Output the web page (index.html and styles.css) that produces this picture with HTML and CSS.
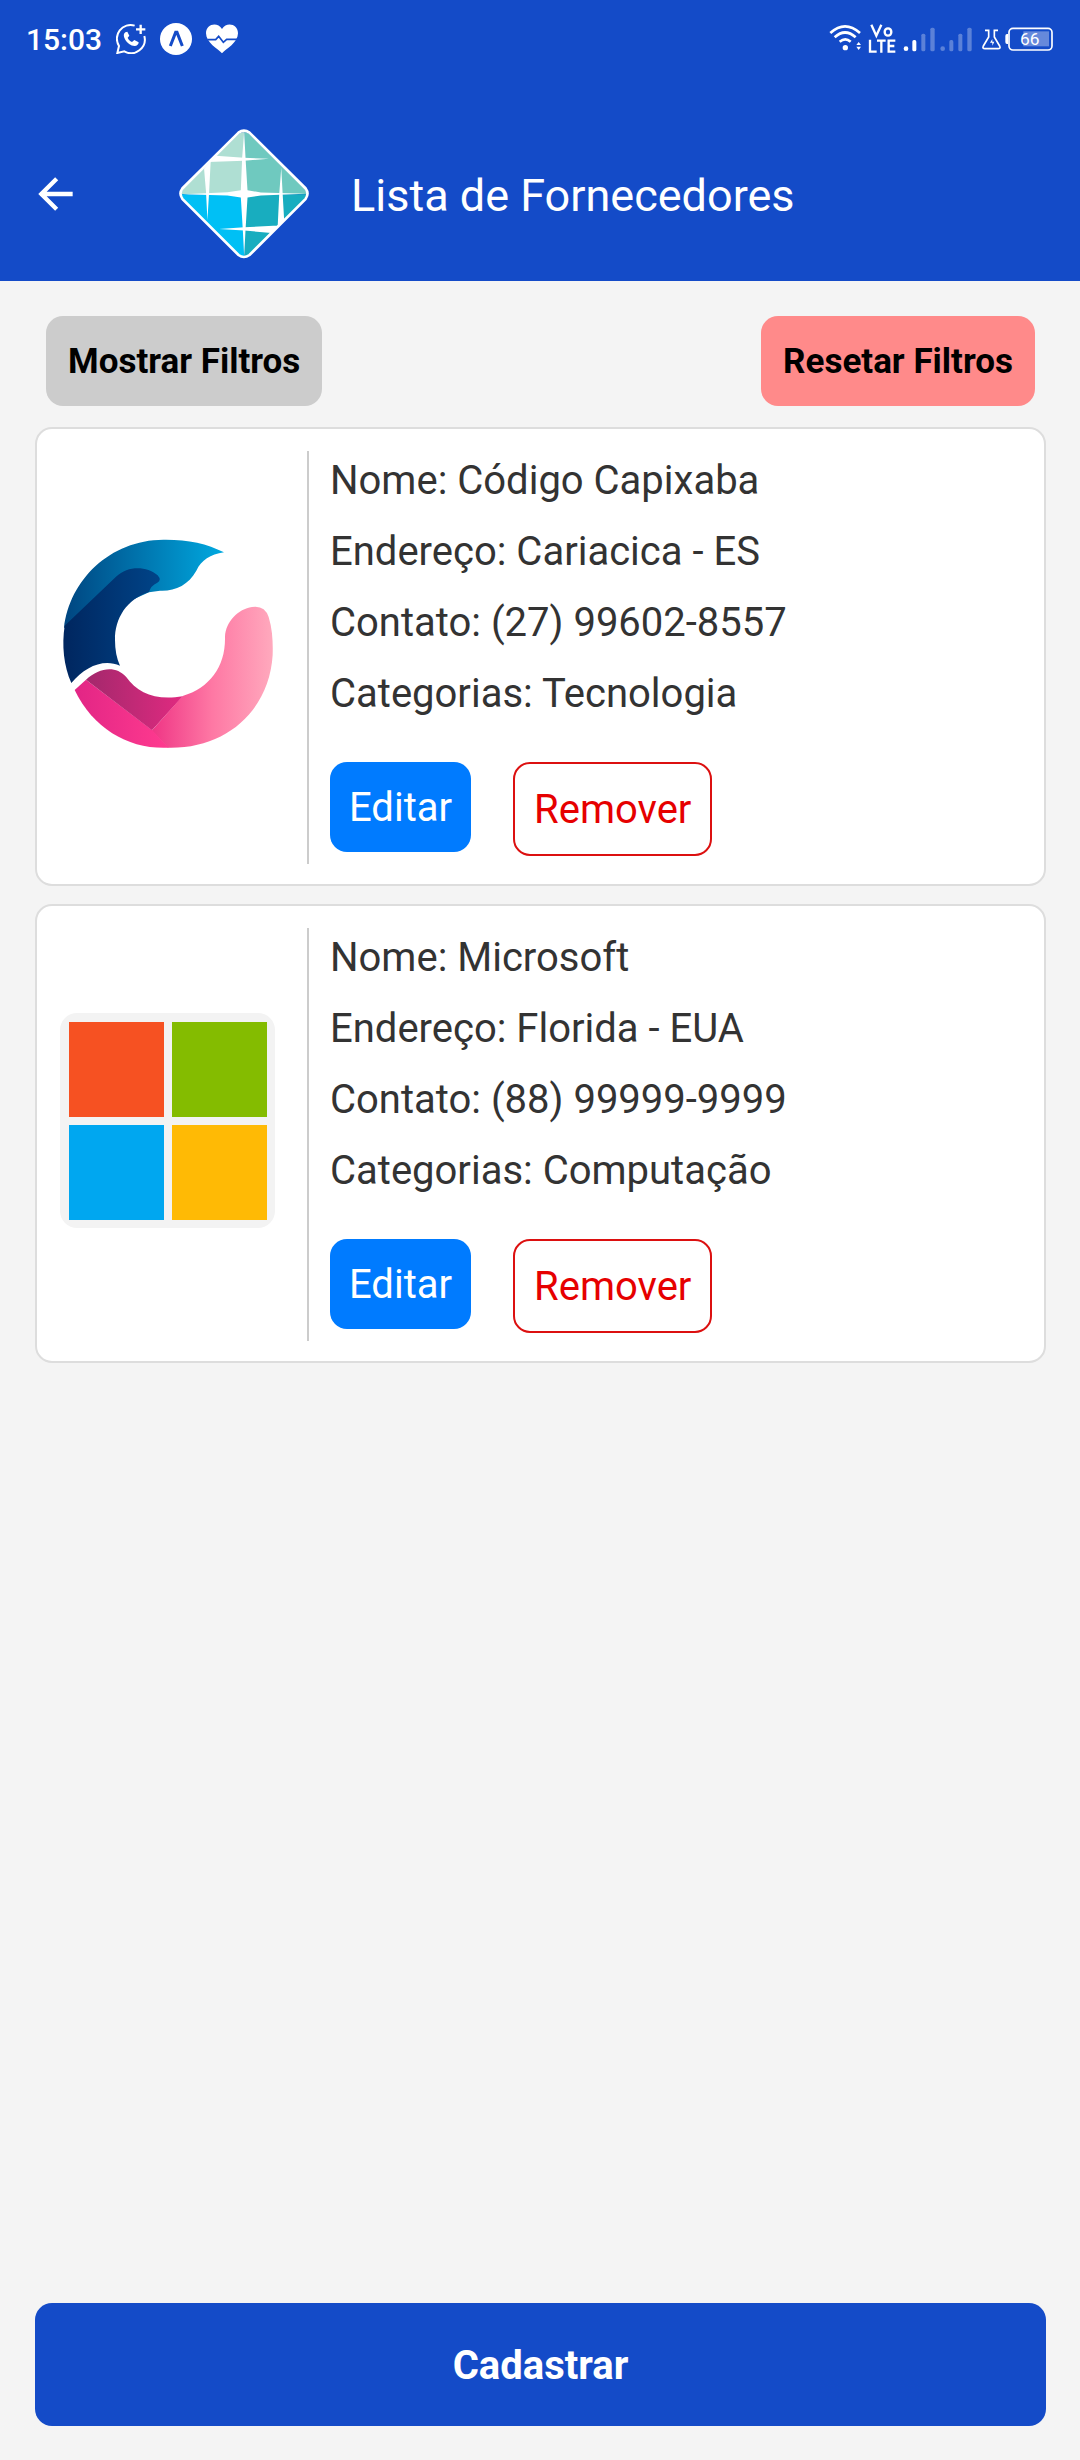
FILE: index.html
```html
<!DOCTYPE html>
<html lang="pt-BR">
<head>
<meta charset="utf-8">
<meta name="viewport" content="width=device-width, initial-scale=1">
<title>Lista de Fornecedores</title>
<link rel="stylesheet" href="styles.css">
</head>
<body>
<div class="top">
  <div class="status">
    <div class="status-left">
      <span class="clock">15:03</span>
      <svg class="status-icon" width="30" height="30" viewBox="343 72 90 90" fill="none" stroke="#fff" stroke-width="6">
        <path d="M399 77a41 41 0 0 0-47 61l-5 21 21-5a41 41 0 0 0 60-46"/>
        <path d="M403 88h28M417 74v28" stroke-width="7"/>
        <path d="M371 97c-6 4-6 12-1 21 7 12 17 20 29 20 7 0 12-5 12-11l-13-7-7 6c-7-3-10-7-13-13l5-6-6-12z" fill="#fff" stroke="none"/>
      </svg>
      <svg class="status-icon" width="32" height="32" viewBox="480 69 96 96">
        <circle cx="528" cy="117" r="48" fill="#fff"/>
        <path d="M511 138l16-41h4l16 41" fill="none" stroke="#144bc8" stroke-width="9"/>
      </svg>
      <svg class="status-icon" width="32" height="30" viewBox="621 73 96 88">
        <path d="M669 160c-12-13-48-32-48-60 0-28 34-36 48-13 14-23 48-15 48 13 0 28-36 47-48 60z" fill="#fff"/>
        <path d="M625 119h25l9-10 14 18 10-9h31" fill="none" stroke="#144bc8" stroke-width="5"/>
      </svg>
    </div>
    <svg class="status-right" width="226" height="32" viewBox="58 69 678 96" fill="none" stroke="#fff" stroke-width="7">
      <path d="M62 99q44-40 89 0M75 112q31-29 63 0M90 125q17-14 33 0" stroke-width="8"/>
      <circle cx="107" cy="143" r="8" fill="#fff" stroke="none"/>
      <path d="M147 126l7 9h-14zM147 150l-7-10h14z" fill="#fff" stroke="none"/>
      <path d="M185 74l15 33 15-33"/>
      <ellipse cx="235" cy="96" rx="10" ry="11"/>
      <path d="M181 119v36h20M202 122h26M215 122v36M257 122h-20v33h20M237 138h17"/>
      <g stroke="none" fill="#fff">
        <circle cx="289" cy="146" r="7"/><rect x="308" y="120" width="12" height="34" rx="5"/>
        <g opacity=".3"><rect x="335" y="101" width="12" height="53" rx="5"/><rect x="362" y="83" width="13" height="71" rx="5"/><circle cx="399" cy="146" r="7"/><rect x="419" y="120" width="12" height="34" rx="5"/><rect x="446" y="101" width="12" height="53" rx="5"/><rect x="473" y="83" width="13" height="71" rx="5"/></g>
      </g>
      <path d="M526 91h11v20l-16 27q-4 8 5 8h39q9 0 5-8l-16-27v-20h11" stroke-width="5"/>
      <path d="M548 117l-7 11h7v9l6-12h-6z" fill="#fff" stroke="none"/>
      <rect x="641" y="94" width="77" height="45" fill="#fff" opacity=".35" stroke="none"/>
      <rect x="598" y="85" width="129" height="65" rx="12" stroke-width="5"/>
      <path d="M595 102h-3q-5 0-5 6v18q0 6 5 6h3z" fill="#fff" stroke="none"/>
      <text class="battery-text" x="631" y="135" fill="#fff" stroke="none">66</text>
    </svg>
  </div>
  <header class="header">
    <button class="back" type="button" aria-label="Voltar">
      <svg width="36" height="36" viewBox="116 198 108 108" fill="none" stroke="#fff" stroke-width="13"><path d="M220 252h-94M172 206l-46 46 46 46"/></svg>
    </button>
    <svg class="brand" width="130" height="130" viewBox="539 59 389 389">
      <defs><clipPath id="gem"><path d="M717 74q16-12 33 0l165 164q11 15 0 30l-165 167q-17 12-33 0l-165-167q-11-15 0-30z"/></clipPath></defs>
      <g clip-path="url(#gem)">
        <path d="M540 60h194v194h-194z" fill="#afdfd3"/><path d="M734 60h194v194h-194z" fill="#6fc9bf"/>
        <path d="M540 254h194v194h-194z" fill="#00c0f5"/><path d="M734 254h194v194h-194z" fill="#18adbf"/>
        <g fill="#fff">
          <path d="M734 66l4 78 6 98 40 7 132 4-132 5-40 6-6 98-4 78-4-78-6-98-40-6-132-4 132-6 40-6 4-98z"/>
          <path d="M625 158l24-19 84 6 75 3-75 6zM614 178l20-26-5 98-5 82-4-82z"/>
          <path d="M845 175l4 75 5 88-20 18 5-104zM659 358l75-5 102-5-20 22-82-7z"/>
        </g>
      </g>
      <path d="M717 70q16-12 33 0l168 167q11 15 0 31l-168 168q-17 12-33 0l-168-168q-11-16 0-31z" fill="none" stroke="#fff" stroke-width="8"/>
    </svg>
    <h1 class="title">Lista de Fornecedores</h1>
  </header>
</div>

<main class="content">
  <div class="filters">
    <button class="filter-btn" type="button">Mostrar Filtros</button>
    <button class="filter-btn filter-reset" type="button">Resetar Filtros</button>
  </div>

  <article class="card">
    <div class="card-media">
      <svg class="card-logo" viewBox="90 108 645 645" role="img" aria-label="Código Capixaba">
        <defs>
          <linearGradient id="sky"><stop offset="0" stop-color="#004580"/><stop offset="1" stop-color="#00a9e0"/></linearGradient>
          <linearGradient id="navy"><stop offset="0" stop-color="#00265f"/><stop offset="1" stop-color="#004488"/></linearGradient>
          <linearGradient id="rose"><stop offset="0" stop-color="#ef3585"/><stop offset=".5" stop-color="#fe78a4"/><stop offset="1" stop-color="#ffa9bd"/></linearGradient>
          <linearGradient id="hot"><stop offset="0" stop-color="#e22585"/><stop offset="1" stop-color="#ff3b8f"/></linearGradient>
          <linearGradient id="plum"><stop offset="0" stop-color="#a3286c"/><stop offset="1" stop-color="#e02a80"/></linearGradient>
        </defs>
        <path d="M102 384C118 240 240 120 400 119C470 118 530 130 582 157C540 164 515 180 499 212C475 255 435 274 390 272L357 277L240 330z" fill="url(#sky)"/>
        <path d="M104 377L258 230C296 195 351 199 383 226Q396 241 382 248Q362 257 357 276C290 297 254 356 255 420Q255 465 270 497C220 475 165 500 124 549C101 497 95 435 104 377z" fill="url(#navy)"/>
        <path d="M365 692L458 588C540 563 587 500 585 410C587 365 625 327 666 321Q704 315 716 351C728 390 729 430 728 465C718 630 590 747 414 743z" fill="url(#rose)"/>
        <path d="M134 570L168 539L366 690L416 743C300 749 192 690 134 570z" fill="url(#hot)"/>
        <path d="M168 539C208 502 257 496 288 530C324 580 376 602 458 589L366 691z" fill="url(#plum)"/>
      </svg>
    </div>
    <div class="card-body">
      <p class="field">Nome: Código Capixaba</p>
      <p class="field">Endereço: Cariacica - ES</p>
      <p class="field">Contato: (27) 99602-8557</p>
      <p class="field">Categorias: Tecnologia</p>
      <div class="actions">
        <button class="btn btn-edit" type="button">Editar</button>
        <button class="btn btn-remove" type="button">Remover</button>
      </div>
    </div>
  </article>

  <article class="card">
    <div class="card-media">
      <svg class="card-logo" viewBox="0 0 215 215" role="img" aria-label="Microsoft">
        <rect width="215" height="215" fill="#f3f3f3"/>
        <rect x="9" y="9" width="95" height="95" fill="#f65122"/><rect x="112" y="9" width="95" height="95" fill="#84bc00"/>
        <rect x="9" y="112" width="95" height="95" fill="#00a7f0"/><rect x="112" y="112" width="95" height="95" fill="#ffba05"/>
      </svg>
    </div>
    <div class="card-body">
      <p class="field">Nome: Microsoft</p>
      <p class="field">Endereço: Florida - EUA</p>
      <p class="field">Contato: (88) 99999-9999</p>
      <p class="field">Categorias: Computação</p>
      <div class="actions">
        <button class="btn btn-edit" type="button">Editar</button>
        <button class="btn btn-remove" type="button">Remover</button>
      </div>
    </div>
  </article>

  <button class="submit" type="button">Cadastrar</button>
</main>
</body>
</html>
```
FILE: styles.css
```css
* {
  box-sizing: border-box;
}

body {
  display: flex;
  flex-direction: column;
  min-height: 100vh;
  margin: 0;
  background: #f4f4f4;
  color: #333;
  font-family: Roboto, sans-serif;
  font-size: 40px;
}

button {
  margin: 0;
  border: 0;
  font: inherit;
  cursor: pointer;
}

.top {
  background: #144bc8;
  color: #fff;
}

.status {
  display: flex;
  align-items: center;
  justify-content: space-between;
  height: 78px;
  padding: 0 25px 0 26px;
}

.status-left {
  display: flex;
  align-items: center;
}

.status-icon {
  margin-left: 14px;
}

.clock {
  font-size: 30px;
  font-weight: 500;
}

.battery-text {
  font-family: Roboto, sans-serif;
  font-size: 52px;
}

.header {
  display: flex;
  align-items: center;
  padding: 51px 38px 22px;
}

.back {
  display: flex;
  padding: 0;
  background: none;
}

.brand {
  margin: 0 42px 0 105px;
}

.title {
  margin: 0;
  padding-top: 3px;
  font-size: 45px;
  font-weight: 400;
}

.content {
  display: flex;
  flex: 1;
  flex-direction: column;
  gap: 18px;
  padding: 35px 34px 34px 35px;
}

.filters {
  display: flex;
  justify-content: space-between;
  padding: 0 11px 3px;
}

.filter-btn {
  padding: 23px 22px 21px;
  border-radius: 17px;
  background: #ccc;
  color: #000;
  font-size: 35px;
  font-weight: 700;
  line-height: 46px;
}

.filter-reset {
  background: #ff8a8a;
}

.card {
  display: flex;
  padding: 22px 22px 20px;
  border: 2px solid #ddd;
  border-radius: 17px;
  background: #fff;
}

.card-media {
  display: flex;
  align-items: center;
  padding: 0 32px 28px 1px;
}

.card-logo {
  width: 215px;
  height: 215px;
  border-radius: 17px;
}

.card-body {
  display: flex;
  flex: 1;
  flex-direction: column;
  gap: 24px;
  padding: 6px 0 8px 21px;
  border-left: 2px solid #ccc;
}

.field {
  margin: 0;
  line-height: 47px;
}

.actions {
  display: flex;
  align-items: flex-start;
  gap: 42px;
  padding-top: 21px;
}

.btn {
  padding: 23px 19px 21px;
  border-radius: 17px;
  line-height: 46px;
}

.btn-edit {
  background: #007bff;
  color: #fff;
}

.btn-remove {
  border: 2px solid #dc1010;
  background: #fff;
  color: #e60000;
}

.submit {
  margin-top: auto;
  padding: 39px 38px 37px;
  border-radius: 17px;
  background: #144bc8;
  color: #fff;
  font-weight: 700;
  line-height: 47px;
}
```
